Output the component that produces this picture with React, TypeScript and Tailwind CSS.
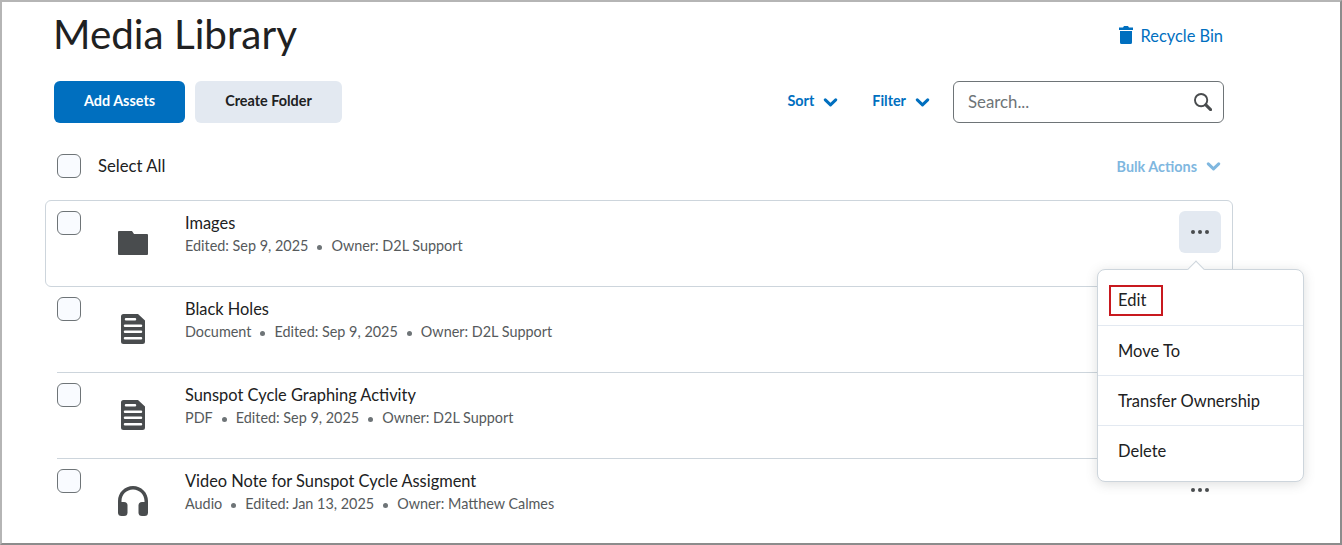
import React from 'react'

const Chevron = ({ className }: { className: string }) => (
  <svg viewBox="0 0 14 9" className={className} fill="none" stroke="currentColor" strokeWidth="3" strokeLinecap="round" strokeLinejoin="round">
    <path d="M1.8 1.8 7 6.8l5.200-5" />
  </svg>
)

const Checkbox = () => (
  <div className="w-6 h-6 shrink-0 rounded-[6px] border border-[#6e7477] bg-[#f9fbff]" />
)

const Dots = () => (
  <svg viewBox="0 0 18 4" className="w-[18px] h-1 text-[#494c4e]" fill="currentColor">
    <circle cx="2" cy="2" r="2" />
    <circle cx="9" cy="2" r="2" />
    <circle cx="16" cy="2" r="2" />
  </svg>
)

const FolderIcon = () => (
  <svg viewBox="0 0 30 24" className="w-[30px] h-6 text-[#494c4e]" fill="currentColor">
    <path d="M1 0h13l2 3h13a1 1 0 0 1 1 1v19a1 1 0 0 1-1 1H1a1 1 0 0 1-1-1V1a1 1 0 0 1 1-1z" />
  </svg>
)

const DocIcon = () => (
  <svg viewBox="0 0 24 30" className="w-6 h-[30px] text-[#494c4e]" fill="currentColor" fillRule="evenodd">
    <path d="M2.500 0H17l7 6.500V27.500a2.500 2.500 0 0 1-2.500 2.500h-19A2.500 2.500 0 0 1 0 27.500v-25A2.500 2.500 0 0 1 2.500 0zM5 4a1 1 0 0 0 0 2.500h9A1 1 0 0 0 14 4zM4 10.500a1 1 0 0 0 0 2.500h16a1 1 0 0 0 0-2.500zM4 16.500a1 1 0 0 0 0 2.500h16a1 1 0 0 0 0-2.500zM4 23a1 1 0 0 0 0 2.500h16a1 1 0 0 0 0-2.500z" />
  </svg>
)

const HeadphonesIcon = () => (
  <svg viewBox="0 0 30 30" className="w-[30px] h-[30px] text-[#494c4e]" fill="currentColor">
    <path d="M15 0C6.700 0 0 6.700 0 15v6h3.500v-6C3.500 8.600 8.600 3.500 15 3.500S26.500 8.600 26.500 15v6H30v-6C30 6.700 23.300 0 15 0z" />
    <rect x="0" y="16" width="9.500" height="14" rx="3.500" />
    <rect x="20.500" y="16" width="9.500" height="14" rx="3.500" />
  </svg>
)

const Meta = ({ items }: { items: string[] }) => (
  <div className="flex items-center mt-[1px] text-[14.4px] leading-[20px] text-[#565a5c]">
    {items.map((item, i) => (
      <React.Fragment key={item}>
        {i > 0 && <span className="w-[5px] h-[5px] rounded-full bg-[#6e7477] mx-[9px] mt-[3px]" />}
        <span>{item}</span>
      </React.Fragment>
    ))}
  </div>
)

const rows = [
  { name: 'Black Holes', icon: <DocIcon />, meta: ['Document', 'Edited: Sep 9, 2025', 'Owner: D2L Support'], line: false },
  { name: 'Sunspot Cycle Graphing Activity', icon: <DocIcon />, meta: ['PDF', 'Edited: Sep 9, 2025', 'Owner: D2L Support'], line: true },
  { name: 'Video Note for Sunspot Cycle Assigment', icon: <HeadphonesIcon />, meta: ['Audio', 'Edited: Jan 13, 2025', 'Owner: Matthew Calmes'], line: true },
]

const menuItems = ['Edit', 'Move To', 'Transfer Ownership', 'Delete']

export default function App() {
  return (
    <div className="relative w-[1342px] h-[545px] overflow-hidden bg-white font-['Lato','Liberation_Sans',sans-serif] text-[#202122] border-2 border-[#b5b5b5] border-r-[#8c8c8c] border-b-[#8c8c8c]">
      <div className="flex items-center justify-between pl-[52px] pr-[117px] pt-[7px]">
        <h1 className="-ml-[1px] text-[40.400px] leading-[50px] font-normal">Media Library</h1>
        <div className="flex items-center gap-[8px] text-[#006fbf] text-[16.400px] mt-[2px]">
          <svg viewBox="0 0 14 18" className="w-[14px] h-[18px] mt-[1px]" fill="currentColor">
            <path d="M5 0h4l1 1.500h4V4H0V1.500h4zM1 5h12v11.500a1.500 1.500 0 0 1-1.500 1.500h-9A1.500 1.500 0 0 1 1 16.500z" />
          </svg>
          <span className="mt-[2px]">Recycle Bin</span>
        </div>
      </div>

      <div className="flex items-center pl-[52px] pr-[116px] mt-[22px]">
        <button className="w-[131px] h-[42px] pb-[2px] rounded-[6px] bg-[#006fbf] text-white text-[14.400px] font-bold">Add Assets</button>
        <button className="w-[147px] h-[42px] pb-[2px] ml-[10px] rounded-[6px] bg-[#e3e9f1] text-[#202122] text-[14.400px] font-bold">Create Folder</button>
        <div className="flex items-center gap-[9px] ml-auto text-[#006fbf] text-[14.400px] font-bold">
          <span className="-mt-[2px]">Sort</span>
          <Chevron className="w-[15px] h-[9px] mt-[2px]" />
        </div>
        <div className="flex items-center gap-[9px] ml-[34px] text-[#006fbf] text-[14.400px] font-bold">
          <span className="-mt-[2px]">Filter</span>
          <Chevron className="w-[15px] h-[9px] mt-[2px]" />
        </div>
        <div className="flex items-center justify-between w-[271px] h-[42px] ml-[23px] pl-[14px] pr-[11px] rounded-[6px] border border-[#6e7477] text-[16.800px] text-[#6e7477]">
          <span className="-mt-[1px]">Search...</span>
          <svg viewBox="0 0 19 19" className="w-[18px] h-[18px] text-[#494c4e]" fill="none" stroke="currentColor">
            <circle cx="7.500" cy="7.500" r="6.500" strokeWidth="2" />
            <path d="M12.500 12.500 17.500 17.500" strokeWidth="3.200" strokeLinecap="round" />
          </svg>
        </div>
      </div>

      <div className="flex items-center justify-between pl-[55px] pr-[119px] mt-[31px] h-6">
        <div className="flex items-center gap-[17px] text-[16.700px]">
          <Checkbox />
          <span className="mt-[2px]">Select All</span>
        </div>
        <div className="flex items-center gap-[9px] text-[#7fb7df] text-[14.400px] font-bold">
          <span className="mt-[1px]">Bulk Actions</span>
          <Chevron className="w-[15px] h-[9px] mt-[2px]" />
        </div>
      </div>

      <div className="ml-[43px] w-[1188px] h-[87px] mt-[22px] flex items-start pl-[11px] pt-[10px] rounded-[6px] border border-[#cdd5dc]">
        <Checkbox />
        <div className="w-[30px] mt-[20px] ml-[37px]">
          <FolderIcon />
        </div>
        <div className="ml-[37px]">
          <div className="text-[16.400px] leading-[24px]">Images</div>
          <Meta items={['Edited: Sep 9, 2025', 'Owner: D2L Support']} />
        </div>
        <div className="ml-auto mr-[11px] w-[42px] h-[42px] flex items-center justify-center rounded-[6px] bg-[#e3e9f1]">
          <Dots />
        </div>
      </div>

      {rows.map(row => (
        <div key={row.name} className={`ml-[55px] w-[1164px] flex items-start pt-[10px] ${row.line ? 'h-[86px] border-t border-[#cdd5dc]' : 'h-[85px]'}`}>
          <Checkbox />
          <div className="w-[30px] mt-[17px] ml-[37px] flex justify-center">{row.icon}</div>
          <div className="ml-[37px]">
            <div className="text-[16.400px] leading-[24px]">{row.name}</div>
            <Meta items={row.meta} />
          </div>
          <div className="ml-auto mr-[12px] mt-[19px] w-[18px]">
            <Dots />
          </div>
        </div>
      ))}

      <div className="absolute left-[1095px] top-[267px] w-[207px] h-[213px] rounded-[8px] border border-[#cdd5dc] bg-white shadow-[0_2px_12px_rgba(86,90,92,0.2)]">
        <div className="absolute -top-[7px] left-[92px] w-3 h-3 rotate-45 border-l border-t border-[#cdd5dc] bg-white" />
        {menuItems.map((item, i) => (
          <div key={item} className={`relative h-[50px] pl-5 flex items-center text-[16.500px] ${i > 0 ? 'border-t border-[#e3e9f1]' : 'mt-[5px]'}`}>
            <span className={i > 0 ? 'mt-[1px]' : ''}>{item}</span>
            {i === 0 && <div className="absolute left-[11px] top-[10px] w-[54px] h-[31px] border-2 border-[#c8191f]" />}
          </div>
        ))}
      </div>
    </div>
  )
}
